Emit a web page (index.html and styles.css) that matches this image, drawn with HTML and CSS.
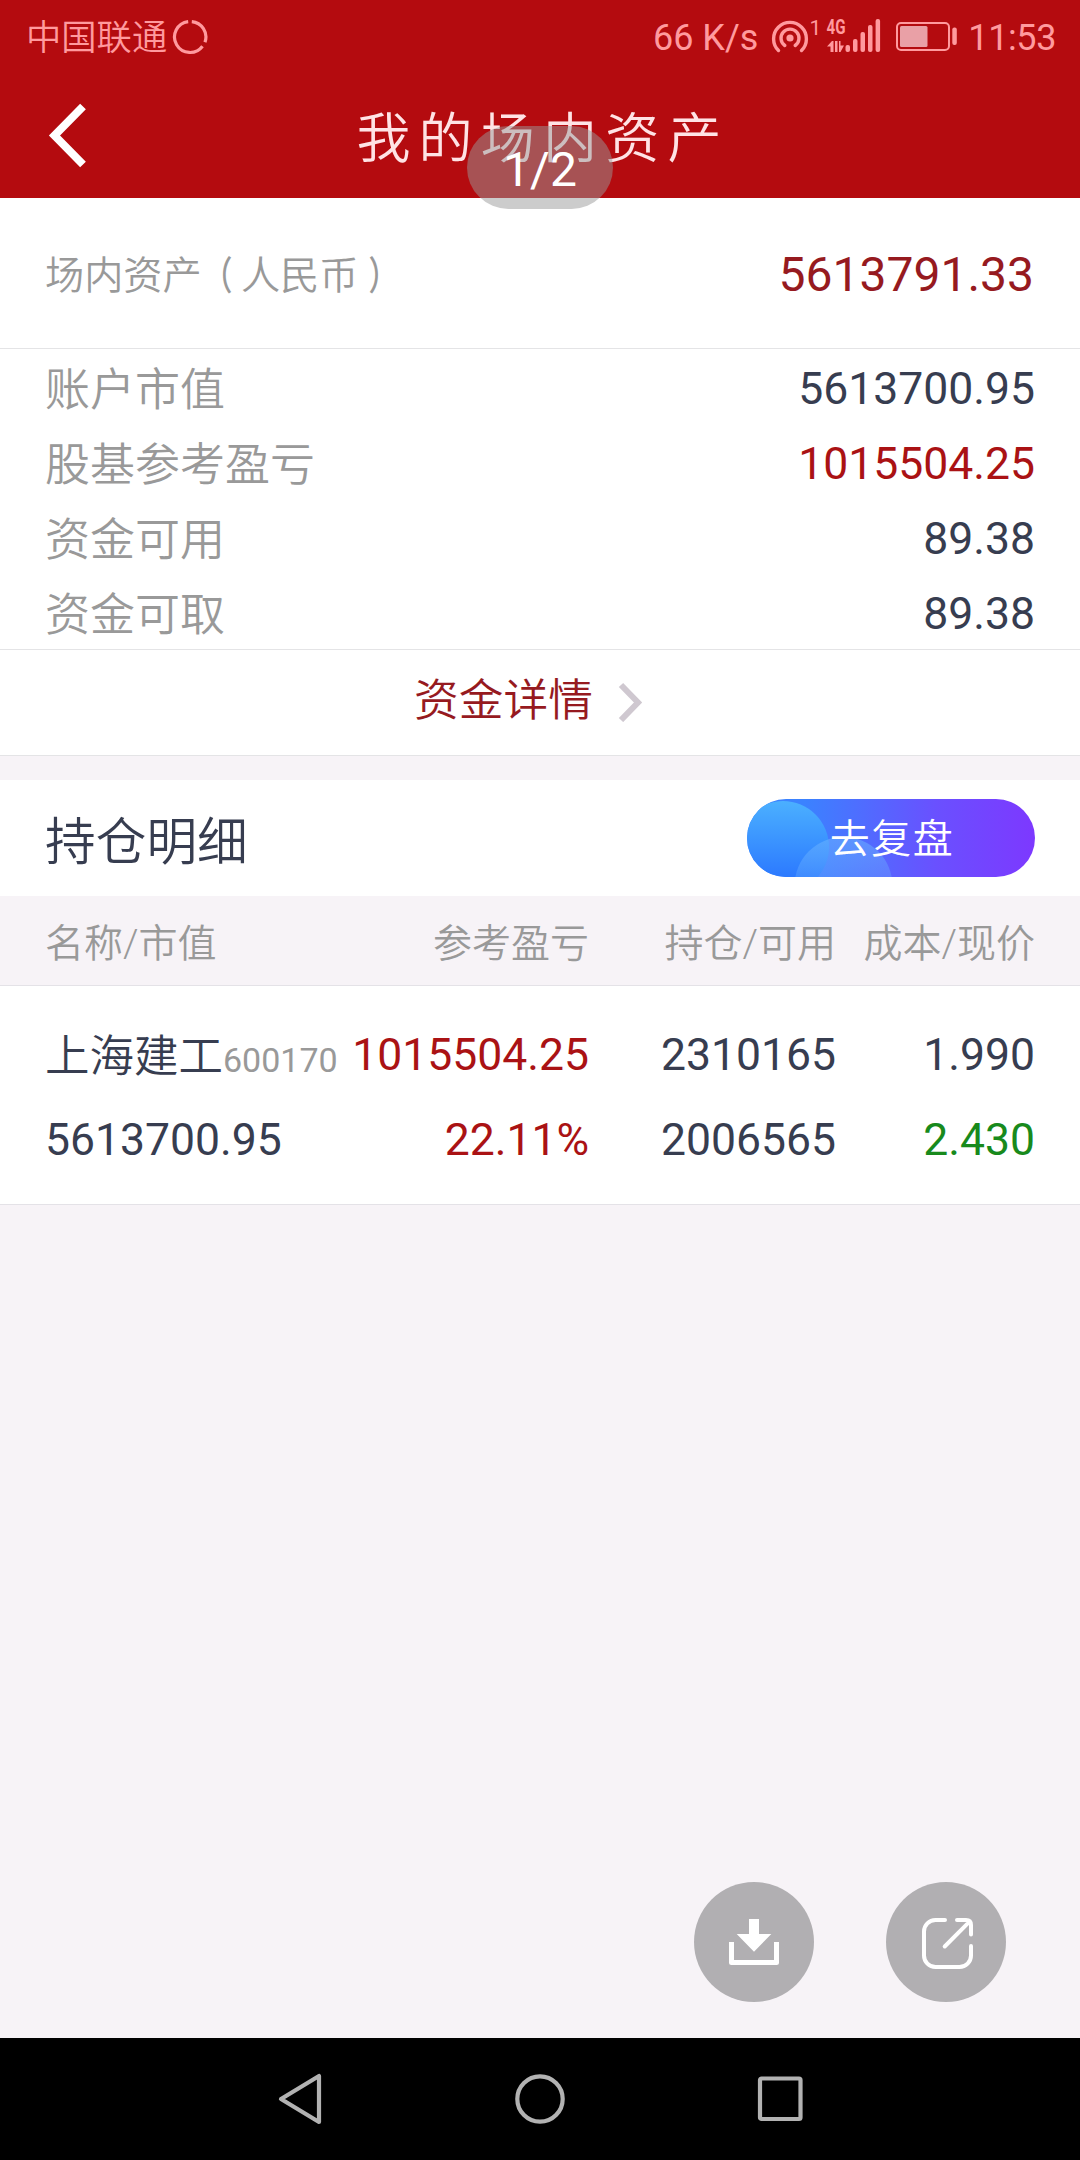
FILE: index.html
```html
<!DOCTYPE html>
<html lang="zh-CN">
<head>
<meta charset="utf-8">
<title>我的场内资产</title>
<link rel="stylesheet" href="styles.css">
</head>
<body>
<div class="screen">
  <header class="top">
    <div class="status">
      <div class="carrier">
        <span class="carrier-name">中国联通</span>
        <svg class="ring" width="36" height="36" viewBox="0 0 36 36"><path d="M19.8 2.6A15.5 15.5 0 0 1 33 23.2M30.5 27.2A15.5 15.5 0 1 1 16.2 2.6" fill="none" stroke="currentColor" stroke-width="3.2"/></svg>
      </div>
      <div class="indicators">
        <span class="speed">66 K/s</span>
        <svg class="signals" width="190" height="54" viewBox="770 10 190 54" fill="currentColor">
          <circle cx="790" cy="38" r="3.6"/>
          <path d="M784.8 45.5a9 9 0 1 1 10.4 0M778.5 50.5a16.4 16.4 0 1 1 23 0" fill="none" stroke="currentColor" stroke-width="3.4" stroke-linecap="round"/>
          <text x="809.5" y="34.5" font-size="21">1</text>
          <text x="826.5" y="34" font-size="20.5" font-weight="700" textLength="19" lengthAdjust="spacingAndGlyphs">4G</text>
          <path d="M827 46.5l5-5.5h1.5v11h-3v-5.500zM835 41h2.500v11h-2.500zM839 41h1.500v4.500h3.500l-3.500 6.500h-1.500z"/>
          <rect x="845.500" y="45" width="4.500" height="7" rx="2"/>
          <rect x="853" y="39" width="4.500" height="13" rx="2"/>
          <rect x="860.500" y="32" width="4.500" height="20" rx="2"/>
          <rect x="868" y="25" width="4.500" height="27" rx="2"/>
          <rect x="875.600" y="19" width="4.500" height="33" rx="2"/>
          <rect x="897" y="23" width="52" height="27" rx="4" fill="none" stroke="currentColor" stroke-width="2"/>
          <rect class="charge" x="900" y="26" width="27.500" height="21" rx="1.500"/>
          <rect x="952.300" y="27.500" width="4.500" height="17.500" rx="2"/>
        </svg>
        <span class="clock">11:53</span>
      </div>
    </div>
    <div class="titlebar">
      <svg class="back" width="42" height="70" viewBox="-2 0 42 70"><path d="M35 6.500L6.500 35.500L35 64.500" fill="none" stroke="#fff" stroke-width="8"/></svg>
      <h1 class="title">我的场内资产</h1>
    </div>
    <div class="page-badge">1/2</div>
  </header>

  <section class="total">
    <span class="total-label">场内资产<span class="paren open">（</span>人民币<span class="paren close">）</span></span>
    <span class="total-value">5613791.33</span>
  </section>

  <dl class="stats">
    <div class="stat"><dt>账户市值</dt><dd>5613700.95</dd></div>
    <div class="stat"><dt>股基参考盈亏</dt><dd class="gain">1015504.25</dd></div>
    <div class="stat"><dt>资金可用</dt><dd>89.38</dd></div>
    <div class="stat"><dt>资金可取</dt><dd>89.38</dd></div>
  </dl>

  <a class="detail">
    <span>资金详情</span>
    <svg class="chevron" width="26" height="40" viewBox="0 0 26 40"><path d="M3 3L20 20.500L3 38" fill="none" stroke="#cfc8d0" stroke-width="6"/></svg>
  </a>

  <section class="holdings">
    <div class="holdings-head">
      <h2 class="holdings-title">持仓明细</h2>
      <button class="review">
        <svg class="bubbles" width="288" height="78" viewBox="0 0 288 78">
          <defs>
            <linearGradient id="big" x1="0" y1="0" x2="0" y2="1"><stop offset="0" stop-color="#4bb0ff"/><stop offset=".85" stop-color="#2b78ff"/></linearGradient>
            <linearGradient id="small" x1="0" y1="0" x2="0" y2="1"><stop offset="0" stop-color="#6cb4ff" stop-opacity=".55"/><stop offset=".5" stop-color="#6cb4ff" stop-opacity=".25"/></linearGradient>
          </defs>
          <circle cx="36" cy="48" r="46" fill="url(#big)"/>
          <circle cx="96.500" cy="87" r="49" fill="url(#small)"/>
        </svg>
        <span class="review-text">去复盘</span>
      </button>
    </div>
    <div class="row row-head">
      <span>名称/市值</span><span>参考盈亏</span><span>持仓/可用</span><span>成本/现价</span>
    </div>
    <div class="row row-data">
      <div class="cell"><span class="stock">上海建工<small class="code">600170</small></span><span>5613700.95</span></div>
      <div class="cell gain"><span>1015504.25</span><span>22.11%</span></div>
      <div class="cell"><span>2310165</span><span>2006565</span></div>
      <div class="cell"><span>1.990</span><span class="price">2.430</span></div>
    </div>
  </section>

  <div class="actions">
    <svg class="fab" width="120" height="120" viewBox="0 0 120 120"><circle cx="60" cy="60" r="60" fill="#b1afb2"/><path d="M55 37h10v15h12.300L60 69.800L42.700 52H55z" fill="#fff"/><path d="M37.500 60v20.500h45V60" fill="none" stroke="#fff" stroke-width="5" stroke-linejoin="round"/></svg>
    <svg class="fab" width="120" height="120" viewBox="0 0 120 120"><circle cx="60" cy="60" r="60" fill="#b1afb2"/><path d="M59 38H49.500A11.500 11.500 0 0 0 38 49.500V73.500A11.500 11.500 0 0 0 49.500 85H73.500A11.500 11.500 0 0 0 85 73.500V64M71 38H80Q85 38 85 43V52.500M58.700 64.500L83 40.200" fill="none" stroke="#fff" stroke-width="4" stroke-linecap="round"/></svg>
  </div>

  <nav class="navbar">
    <svg width="50" height="54" viewBox="0 0 50 54"><path d="M44 4V50L6 27z"/></svg>
    <svg width="54" height="54" viewBox="0 0 54 54"><circle cx="27" cy="27" r="22.700"/></svg>
    <svg width="50" height="54" viewBox="0 0 50 54"><rect x="5" y="6.500" width="40.500" height="40.500" rx="1.500"/></svg>
  </nav>
</div>
</body>
</html>
```
FILE: styles.css
```css
* { box-sizing: border-box; }

body {
  margin: 0;
  background: #f7f3f7;
  font-family: Roboto, "Noto Sans CJK SC", sans-serif;
  font-weight: 400;
  color: #373d50;
}

h1, h2, dl, dd { margin: 0; font-weight: inherit; }

svg { display: block; flex: none; }

.screen {
  width: 1080px;
  height: 2160px;
  display: flex;
  flex-direction: column;
  overflow: hidden;
}

.top {
  position: relative;
  flex: none;
  height: 198px;
  background: #b40b0f;
}

.status {
  height: 74px;
  padding: 0 24px 0 26px;
  display: flex;
  justify-content: space-between;
  align-items: center;
  color: #ff9a9e;
  font-size: 36px;
  line-height: 74px;
}

.carrier, .indicators { display: flex; align-items: center; }
.carrier-name { font-size: 35.300px; font-weight: 350; padding-top: 2px; }
.ring { margin-left: 5px; }
.speed { margin-right: 12px; padding-top: 2px; }
.clock { margin-left: 8px; letter-spacing: -0.400px; padding-top: 2px; }
.charge { fill: #e9a0a6; }

.titlebar {
  height: 124px;
  padding: 26px 46px 0;
  display: grid;
  grid-template-columns: 42px 1fr 42px;
}

.title {
  font-size: 54px;
  font-weight: 350;
  line-height: 80px;
  letter-spacing: 8.200px;
  padding-left: 6px;
  text-align: center;
  color: #ffe3e5;
}

.page-badge {
  position: absolute;
  left: 467px;
  top: 126px;
  width: 146px;
  height: 83px;
  border-radius: 42px;
  background: rgba(153, 153, 153, 0.5);
  color: #fff;
  font-size: 48px;
  line-height: 87px;
  text-align: center;
}

.total {
  flex: none;
  height: 151px;
  padding: 0 46px 0 45px;
  display: flex;
  justify-content: space-between;
  background: #fff;
  border-bottom: 1px solid #e4e4e6;
}

.total-label { font-size: 39.200px; font-weight: 350; line-height: 156px; color: #999; }
.paren { display: inline-block; font-weight: 500; line-height: 1; }
.open { transform: translateX(-6.500px) scaleX(0.750); transform-origin: 29.500px 50%; }
.close { transform: translateX(8px) scaleX(0.750); transform-origin: 6px 50%; }
.total-value { font-size: 48px; line-height: 154px; color: #961a1f; }

.stats {
  flex: none;
  height: 301px;
  padding: 0 45px;
  background: #fff;
  border-bottom: 1px solid #e4e4e6;
}

.stat {
  height: 75px;
  display: flex;
  justify-content: space-between;
  font-size: 44.500px;
  line-height: 81px;
}

.stat dt { font-size: 45px; font-weight: 350; line-height: 83px; color: #999; }
.gain, .stat .gain { color: #aa1214; }

.detail {
  flex: none;
  height: 106px;
  padding-right: 22px;
  display: flex;
  justify-content: center;
  gap: 25px;
  background: #fff;
  border-bottom: 1px solid #e4e4e6;
  color: #961a1f;
  font-size: 44.700px;
  font-weight: 350;
  line-height: 103px;
}

.chevron { margin-top: 32px; }

.holdings {
  flex: none;
  margin-top: 24px;
  background: #fff;
}

.holdings-head {
  height: 116px;
  padding: 0 45px;
  display: flex;
  justify-content: space-between;
  align-items: center;
}

.holdings-title { font-size: 50.700px; font-weight: 350; line-height: 108px; padding-top: 9px; }

.review {
  display: grid;
  width: 288px;
  height: 78px;
  padding: 0;
  border: 0;
  border-radius: 39px;
  overflow: hidden;
  background: linear-gradient(90deg, #3b82ff 20%, #6a50ff 66%, #7d38ff 100%);
  color: #fff;
  font: 350 40px/81px Roboto, "Noto Sans CJK SC", sans-serif;
}

.bubbles, .review-text { grid-area: 1 / 1; }
.review-text { z-index: 1; letter-spacing: 1.500px; padding-left: 2px; }

.row {
  display: grid;
  grid-template-columns: 300px 1fr 247px 199px;
  padding: 0 45px;
  border-bottom: 1px solid #e4e2e7;
  text-align: right;
}

.row > :first-child { text-align: left; }

.row-head {
  height: 90px;
  background: #f7f3f7;
  color: #999;
  font-size: 39px;
  font-weight: 350;
  line-height: 96px;
}

.row-data {
  height: 219px;
  padding-top: 27px;
  font-size: 44.500px;
  line-height: 85px;
}

.cell { display: flex; flex-direction: column; white-space: nowrap; }
.cell > span { height: 85px; }
.cell > .stock { font-weight: 350; line-height: 89px; }
.code { font-size: 34px; font-weight: 400; color: #999; }
.price { color: #188a1c; }

.actions {
  flex: 1;
  display: flex;
  justify-content: flex-end;
  align-items: flex-end;
  gap: 72px;
  padding: 0 74px 36px 0;
}

.navbar {
  flex: none;
  height: 122px;
  padding: 0 180px;
  display: grid;
  grid-template-columns: repeat(3, 1fr);
  justify-items: center;
  align-items: center;
  background: #000;
  fill: none;
  stroke: #b2b2b2;
  stroke-width: 4.200;
  stroke-linejoin: round;
}
```
